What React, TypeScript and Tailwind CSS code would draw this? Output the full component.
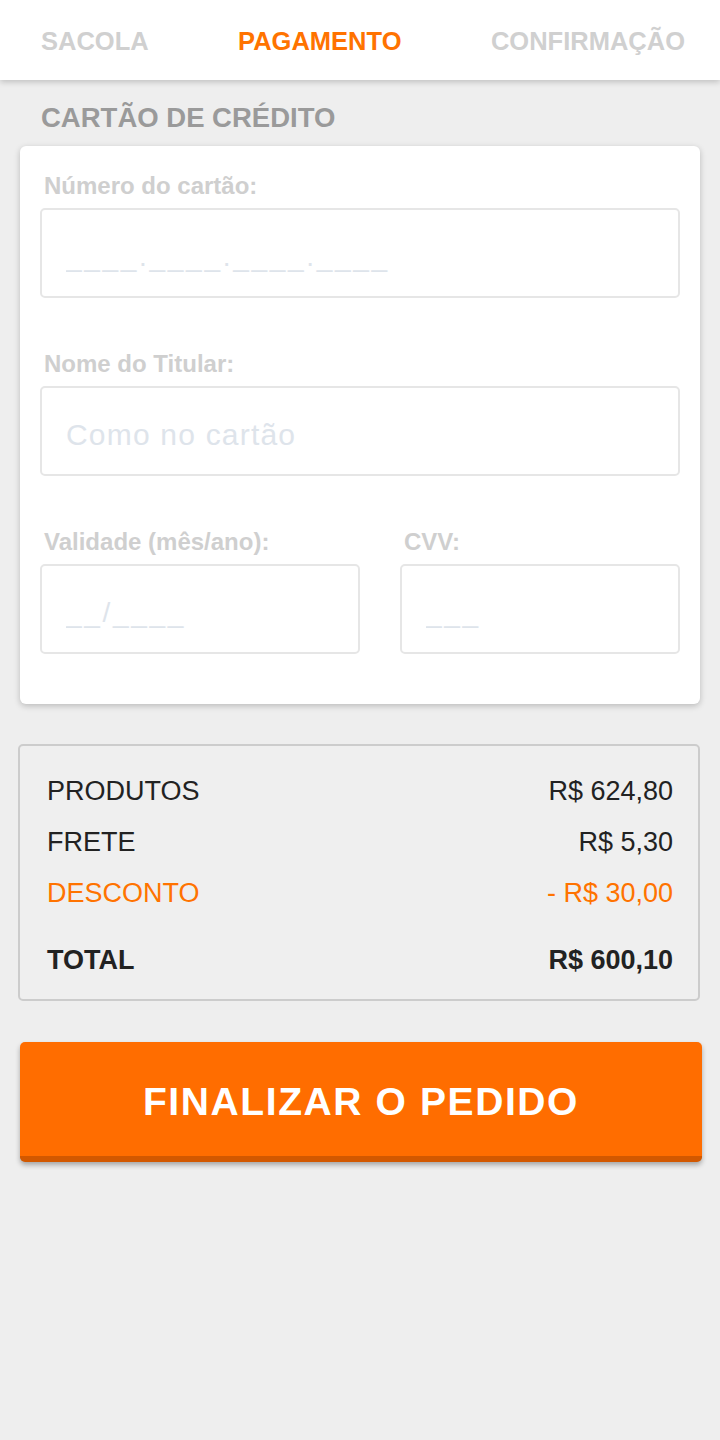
import React from 'react';

const steps = [
  { id: 'sacola', label: 'SACOLA', active: false },
  { id: 'pagamento', label: 'PAGAMENTO', active: true },
  { id: 'confirmacao', label: 'CONFIRMAÇÃO', active: false },
];

const totals = [
  { id: 'produtos', label: 'PRODUTOS', value: 'R$ 624,80', tone: 'text-[#222222]' },
  { id: 'frete', label: 'FRETE', value: 'R$ 5,30', tone: 'text-[#222222]' },
  { id: 'desconto', label: 'DESCONTO', value: '- R$ 30,00', tone: 'text-[#ff7300]' },
];

function Field({
  label,
  placeholder,
  masked = false,
}: {
  label: string;
  placeholder: string;
  masked?: boolean;
}) {
  return (
    <div className="flex flex-col">
      <label className="pl-1 text-[24px] leading-none font-bold text-[#cfcfcf]">{label}</label>
      <input
        className={`mt-[10px] h-[90px] w-full rounded-[5px] border-2 border-[#e6e6e6] bg-white px-6 pt-2 text-[#333] outline-none placeholder:text-[#dee4eb] ${
          masked ? 'text-[28px] tracking-[2.7px]' : 'text-[30px] tracking-[1.2px]'
        }`}
        placeholder={placeholder}
      />
    </div>
  );
}

export default function App() {
  return (
    <div className="min-h-[1440px] w-full bg-[#eeeeee] font-['Liberation_Sans',Arial,sans-serif]">
      {/* Checkout steps */}
      <header className="relative z-10 flex h-[80px] items-center justify-between bg-white pt-[3px] pl-[41px] pr-[35px] shadow-[0_2px_6px_rgba(0,0,0,0.2)]">
        {steps.map((s) => (
          <span
            key={s.id}
            className={`text-[25.5px] leading-none font-bold ${s.active ? 'text-[#ff7300]' : 'text-[#d0d0d0]'}`}
          >
            {s.label}
          </span>
        ))}
      </header>

      <main className="px-[20px]">
        <h2 className="mt-[24px] mb-[14px] pl-[21px] text-[27.5px] leading-none font-bold text-[#9a9a9a]">
          CARTÃO DE CRÉDITO
        </h2>

        {/* Card form */}
        <section className="flex flex-col gap-[54px] rounded-[6px] bg-white px-[20px] pt-[28px] pb-[50px] shadow-[0_2px_6px_rgba(0,0,0,0.22)]">
          <Field label="Número do cartão:" placeholder="____.____.____.____" masked />
          <Field label="Nome do Titular:" placeholder="Como no cartão" />
          <div className="grid grid-cols-[320px_1fr] gap-[40px]">
            <Field label="Validade (mês/ano):" placeholder="__/____" masked />
            <Field label="CVV:" placeholder="___" masked />
          </div>
        </section>

        {/* Order summary */}
        <section className="-ml-[2px] mt-[40px] rounded-[5px] border-2 border-[#cccccc] bg-[#efefef] pl-[27px] pr-[25px] pt-[32px] pb-[25px]">
          <div className="flex flex-col gap-[24px]">
            {totals.map((t) => (
              <div key={t.id} className={`flex justify-between text-[27px] leading-none ${t.tone}`}>
                <span>{t.label}</span>
                <span>{t.value}</span>
              </div>
            ))}
          </div>
          <div className="mt-[40px] flex justify-between text-[27px] leading-none font-bold text-[#222222]">
            <span>TOTAL</span>
            <span>R$ 600,10</span>
          </div>
        </section>

        <button className="mt-[41px] flex h-[120px] w-[682px] items-center justify-center rounded-[5px] border-b-[6px] border-[#d25800] bg-[#ff6d00] pt-[6px] text-[39px] leading-none font-bold tracking-[1.6px] text-white shadow-[0_3px_5px_rgba(0,0,0,0.3)]">
          FINALIZAR O PEDIDO
        </button>
      </main>
    </div>
  );
}
